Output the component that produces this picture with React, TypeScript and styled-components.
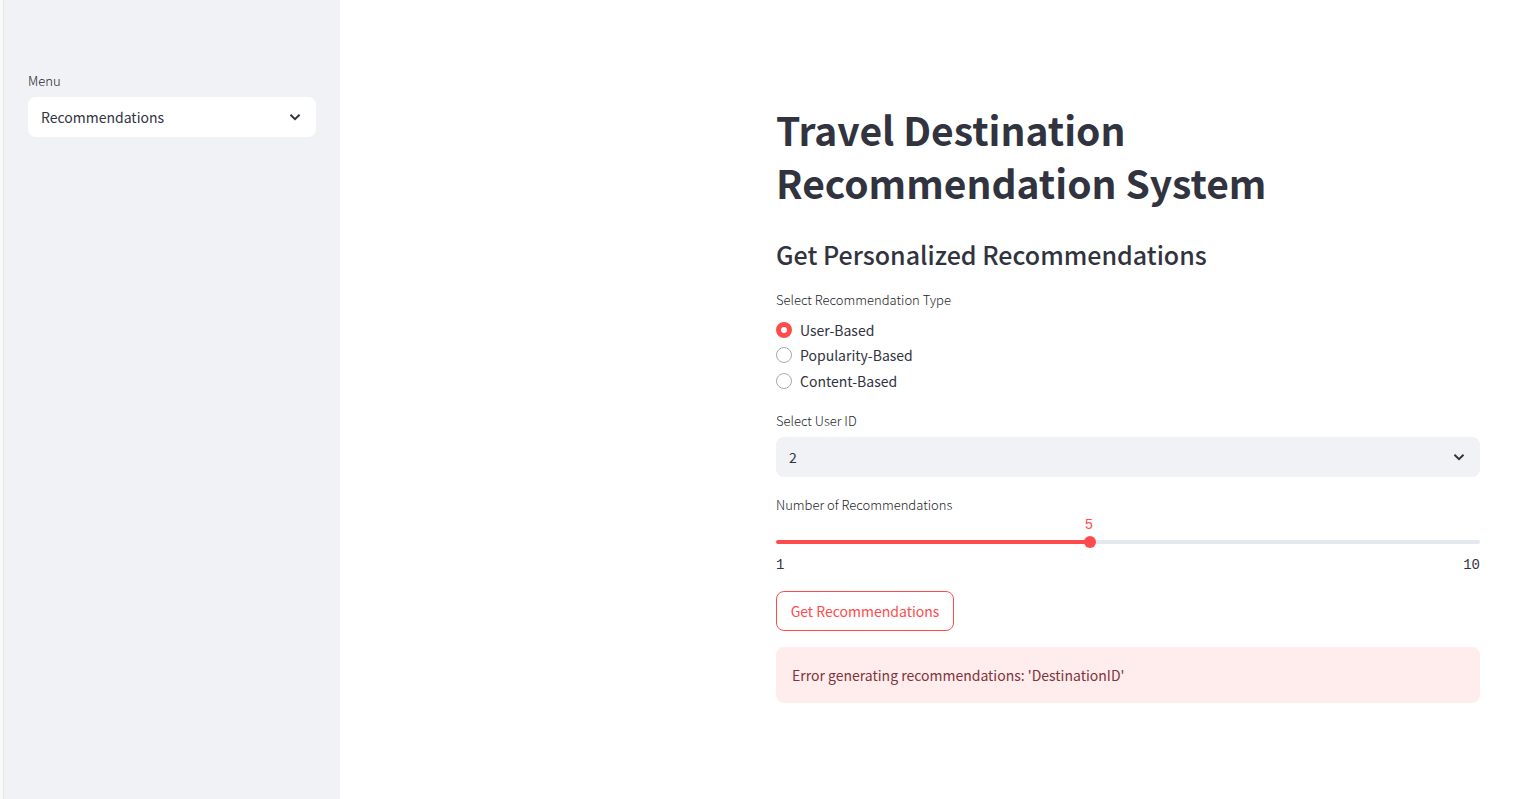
import { useState } from "react";
import type { ReactNode } from "react";
import styled, { createGlobalStyle } from "styled-components";

const colors = {
  text: "#31333f",
  primary: "#ff4b4b",
  panel: "#f0f2f6",
  track: "#e4e9f0",
  errorBg: "#ffecec",
  errorText: "#7d353b",
};

const GlobalStyle = createGlobalStyle`
  *, *::before, *::after { box-sizing: border-box; }
  body {
    margin: 0;
    background: #ffffff;
    color: ${colors.text};
    font-family: "Source Sans Pro", "Noto Sans CJK SC", sans-serif;
    font-size: 14px;
    line-height: 24px;
    font-weight: 400;
  }
  button, input, select { font: inherit; color: inherit; }
`;

const Page = styled.div`
  display: flex;
  min-height: 100vh;
  background: #ffffff;
`;

const Sidebar = styled.aside`
  flex: 0 0 340px;
  padding: 71px 24px 24px 25px;
  background: ${colors.panel};
  border-left: 3px solid #f9f9fa;
  box-shadow: inset 1px 0 0 #e6e8ea;
`;

const Main = styled.main`
  display: flex;
  flex: 1;
  justify-content: flex-end;
  padding: 103px 46px 96px 24px;
`;

const Content = styled.div`
  flex: 0 1 704px;
  min-width: 0;
`;

const Title = styled.h1`
  margin: 0;
  padding-right: 16px;
  font-size: 39px;
  line-height: 53px;
  font-weight: 700;
`;

const Subtitle = styled.h2`
  margin: 28px 0 19px;
  font-size: 25px;
  line-height: 34px;
  font-weight: 500;
`;

const labelText = `
  display: block;
  padding: 0;
  color: #1c1e2a;
  font-size: 13px;
  line-height: 20px;
  font-weight: 300;
`;

const FieldLabel = styled.label`
  ${labelText}
`;

const RadioGroup = styled.fieldset`
  margin: 0 0 17px;
  padding: 0;
  border: 0;
`;

const Legend = styled.legend`
  ${labelText}
  margin-bottom: 7px;
`;

const RadioList = styled.div`
  display: grid;
  grid-template-rows: repeat(3, 1fr);
  height: 77px;
`;

const RadioLabel = styled.label`
  display: flex;
  align-items: center;
  gap: 8px;
  width: fit-content;
  cursor: pointer;
`;

const RadioInput = styled.input`
  appearance: none;
  width: 16px;
  height: 16px;
  margin: 0;
  border: 1px solid #a9aab0;
  border-radius: 50%;
  background: #ffffff;

  &:checked {
    border: 5px solid ${colors.primary};
  }
`;

const SelectBox = styled.div`
  position: relative;
  margin-top: 6px;
`;

const SelectControl = styled.select<{ $background: string }>`
  appearance: none;
  display: block;
  width: 100%;
  height: 40px;
  padding: 0 40px 0 13px;
  border: 0;
  border-radius: 8px;
  background: ${(p) => p.$background};
`;

const Chevron = styled.svg`
  position: absolute;
  top: 10px;
  right: 11px;
  width: 20px;
  height: 20px;
  pointer-events: none;
`;

const SliderField = styled.div`
  margin-top: 18px;
`;

const SliderTrack = styled.div`
  position: relative;
  padding-top: 21px;
`;

const SliderValue = styled.output`
  position: absolute;
  top: 0;
  transform: translateX(-50%);
  color: ${colors.primary};
  font-family: "Liberation Mono", monospace;
  font-size: 14px;
  line-height: 20px;
`;

const Range = styled.input`
  appearance: none;
  display: block;
  width: 100%;
  height: 12px;
  margin: 0;
  background: transparent;

  &::-webkit-slider-runnable-track {
    height: 4px;
    border-radius: 4px;
    background: linear-gradient(
      to right,
      ${colors.primary} var(--filled),
      ${colors.track} var(--filled)
    );
  }

  &::-webkit-slider-thumb {
    appearance: none;
    width: 12px;
    height: 12px;
    margin-top: -4px;
    border-radius: 50%;
    background: ${colors.primary};
  }
`;

const Ticks = styled.div`
  display: flex;
  justify-content: space-between;
  margin-top: 7px;
  font-family: "Liberation Mono", monospace;
  font-size: 14px;
  line-height: 20px;
`;

const SubmitButton = styled.button`
  display: block;
  min-width: 178px;
  height: 40px;
  margin: 16px 0;
  padding: 0 12px;
  border: 1px solid ${colors.primary};
  border-radius: 8px;
  background: #ffffff;
  color: ${colors.primary};
  cursor: pointer;
`;

const ErrorAlert = styled.div`
  padding: 16px;
  border-radius: 8px;
  background: ${colors.errorBg};
  color: ${colors.errorText};
`;

type SelectFieldProps = {
  id: string;
  label: string;
  background: string;
  children: ReactNode;
};

function SelectField({ id, label, background, children }: SelectFieldProps) {
  return (
    <div>
      <FieldLabel htmlFor={id}>{label}</FieldLabel>
      <SelectBox>
        <SelectControl id={id} $background={background}>
          {children}
        </SelectControl>
        <Chevron viewBox="0 0 20 20" aria-hidden="true">
          <path d="M5.5 7.8 10 12.2 14.5 7.8" fill="none" stroke={colors.text} strokeWidth="2" />
        </Chevron>
      </SelectBox>
    </div>
  );
}

const types = ["User-Based", "Popularity-Based", "Content-Based"];
const MIN = 1;
const MAX = 10;

export default function App() {
  const [type, setType] = useState(types[0]);
  const [count, setCount] = useState(5);
  const filled = `${((count - MIN) / (MAX - MIN)) * 100}%`;

  return (
    <>
      <GlobalStyle />
      <Page>
        <Sidebar>
          <SelectField id="menu" label="Menu" background="#ffffff">
            <option>Recommendations</option>
          </SelectField>
        </Sidebar>
        <Main>
          <Content>
            <Title>Travel Destination Recommendation System</Title>
            <Subtitle>Get Personalized Recommendations</Subtitle>
            <RadioGroup>
              <Legend>Select Recommendation Type</Legend>
              <RadioList>
                {types.map((name) => (
                  <RadioLabel key={name}>
                    <RadioInput
                      type="radio"
                      name="type"
                      checked={type === name}
                      onChange={() => setType(name)}
                    />
                    {name}
                  </RadioLabel>
                ))}
              </RadioList>
            </RadioGroup>
            <SelectField id="user" label="Select User ID" background={colors.panel}>
              <option>2</option>
            </SelectField>
            <SliderField>
              <FieldLabel htmlFor="count">Number of Recommendations</FieldLabel>
              <SliderTrack>
                <SliderValue htmlFor="count" style={{ left: filled }}>
                  {count}
                </SliderValue>
                <Range
                  id="count"
                  type="range"
                  min={MIN}
                  max={MAX}
                  value={count}
                  onChange={(e) => setCount(Number(e.target.value))}
                  style={{ ["--filled" as string]: filled }}
                />
              </SliderTrack>
              <Ticks>
                <span>{MIN}</span>
                <span>{MAX}</span>
              </Ticks>
            </SliderField>
            <SubmitButton type="button">Get Recommendations</SubmitButton>
            <ErrorAlert role="alert">Error generating recommendations: 'DestinationID'</ErrorAlert>
          </Content>
        </Main>
      </Page>
    </>
  );
}
